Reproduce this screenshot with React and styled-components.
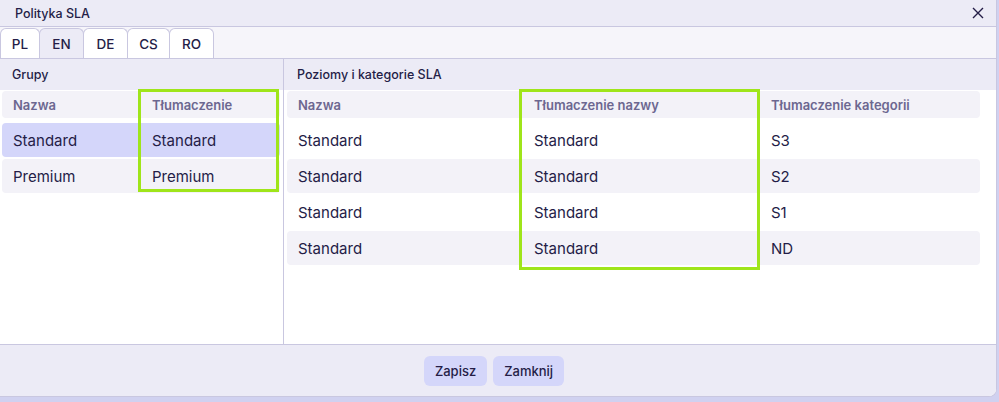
import React from 'react'
import styled, { createGlobalStyle } from 'styled-components'

const GlobalStyle = createGlobalStyle`
  html, body {
    margin: 0;
    padding: 0;
    background: #d0d1f0;
    font-family: Inter, "Noto Sans", sans-serif;
    color: #241d47;
  }
  * { box-sizing: border-box; }
`;

const Dialog = styled.div`
  width: 997px;
  height: 397px;
  background: #fff;
  border-right: 1px solid #c9c7e0;
  border-bottom: 1px solid #c9c7e0;
  border-radius: 0 0 8px 0;
  display: flex;
  flex-direction: column;
  overflow: hidden;
`;

const TitleBar = styled.div`
  height: 27px;
  flex: none;
  display: flex;
  align-items: center;
  justify-content: space-between;
  padding: 0 12px 0 15px;
  background: #ecebf6;
  border-bottom: 1px solid #c9c7e0;
  font-size: 12.5px;
  font-weight: 500;
`;

const CloseBtn = styled.button`
  border: 0;
  background: none;
  padding: 0;
  display: flex;
  color: #241d47;
  cursor: pointer;
`;

const TabRow = styled.div`
  height: 32px;
  flex: none;
  display: flex;
  align-items: flex-end;
  background: #f6f5fa;
  border-bottom: 1px solid #c9c7e0;
`;

const Tab = styled.div`
  height: 30px;
  min-width: ${p => p.w}px;
  display: flex;
  align-items: center;
  justify-content: center;
  font-size: 13.5px;
  font-weight: 500;
  background: ${p => p.active ? '#ecebf6' : '#fff'};
  border: 1px solid #c9c7e0;
  border-bottom: 0;
  border-radius: 6px 6px 0 0;
  margin-right: -1px;
`;

const Body = styled.div`
  flex: 1;
  display: flex;
  min-height: 0;
`;

const Panel = styled.div`
  width: ${p => p.width || 'auto'};
  flex: ${p => p.width ? 'none' : '1'};
  display: flex;
  flex-direction: column;
  border-right: ${p => p.divider ? '1px solid #c9c7e0' : '0'};
`;

const PanelHeader = styled.div`
  height: 31px;
  display: flex;
  align-items: center;
  padding-left: ${p => p.indent}px;
  background: #ecebf6;
  font-size: 12.5px;
  font-weight: 500;
`;

const Table = styled.div`
  position: relative;
  display: flex;
  flex-direction: column;
  gap: 2px;
  padding: 1px ${p => p.padRight}px 0 ${p => p.padLeft}px;
`;

const Row = styled.div`
  display: grid;
  grid-template-columns: ${p => p.cols};
  align-items: center;
  height: ${p => p.head ? 27 : 34}px;
  margin-bottom: ${p => p.head ? 3 : 0}px;
  border-radius: 4px;
  background: ${p => p.selected ? '#d4d6fa' : p.shaded ? '#f3f2f8' : '#fff'};
`;

const Cell = styled.div`
  padding-left: 11px;
  font-size: ${p => p.head ? 13 : 15}px;
  font-weight: ${p => p.head ? 600 : 400};
  color: ${p => p.head ? '#6c6790' : '#241d47'};
  white-space: nowrap;
`;

const Highlight = styled.div`
  position: absolute;
  top: -1px;
  left: ${p => p.left}px;
  width: ${p => p.width}px;
  height: ${p => p.height}px;
  border: 3px solid #9fe51a;
  pointer-events: none;
`;

const Footer = styled.div`
  height: 52px;
  flex: none;
  display: flex;
  align-items: center;
  justify-content: center;
  gap: 6px;
  padding-right: 8px;
  background: #ecebf6;
  border-top: 1px solid #c9c7e0;
`;

const Button = styled.button`
  height: 30px;
  padding: 0 11px;
  border: 0;
  border-radius: 6px;
  background: #d4d6fa;
  color: #241d47;
  font-family: inherit;
  font-size: 13px;
  font-weight: 500;
`;

const groups = ['Standard', 'Premium'];
const levels = ['S3', 'S2', 'S1', 'ND'];
const langs = [['PL', 40], ['EN', 45], ['DE', 45], ['CS', 43], ['RO', 45]];

const leftCols = '139px 1fr';
const rightCols = '236px 237px 1fr';

export default function App() {
  return (
    <>
      <GlobalStyle />
      <Dialog>
        <TitleBar>
          <span>Polityka SLA</span>
          <CloseBtn>
            <svg width="12" height="12" viewBox="0 0 12 12" fill="none" stroke="currentColor" strokeWidth="1.4">
              <path d="M1 1L11 11M11 1L1 11" />
            </svg>
          </CloseBtn>
        </TitleBar>
        <TabRow>
          {langs.map(([l, w]) => <Tab key={l} w={w} active={l === 'EN'}>{l}</Tab>)}
        </TabRow>
        <Body>
          <Panel width="284px" divider>
            <PanelHeader indent={12}>Grupy</PanelHeader>
            <Table padLeft={2} padRight={3}>
              <Row head shaded cols={leftCols}>
                <Cell head>Nazwa</Cell>
                <Cell head>Tłumaczenie</Cell>
              </Row>
              {groups.map((g, i) => (
                <Row key={g} cols={leftCols} selected={i === 0} shaded={i === 1}>
                  <Cell>{g}</Cell>
                  <Cell>{g}</Cell>
                </Row>
              ))}
              <Highlight left={138} width={141} height={103} />
            </Table>
          </Panel>
          <Panel>
            <PanelHeader indent={13}>Poziomy i kategorie SLA</PanelHeader>
            <Table padLeft={3} padRight={16}>
              <Row head shaded cols={rightCols}>
                <Cell head>Nazwa</Cell>
                <Cell head>Tłumaczenie nazwy</Cell>
                <Cell head>Tłumaczenie kategorii</Cell>
              </Row>
              {levels.map((lv, i) => (
                <Row key={lv} cols={rightCols} shaded={i % 2 === 1}>
                  <Cell>Standard</Cell>
                  <Cell>Standard</Cell>
                  <Cell>{lv}</Cell>
                </Row>
              ))}
              <Highlight left={235} width={241} height={181} />
            </Table>
          </Panel>
        </Body>
        <Footer>
          <Button>Zapisz</Button>
          <Button>Zamknij</Button>
        </Footer>
      </Dialog>
    </>
  )
}
